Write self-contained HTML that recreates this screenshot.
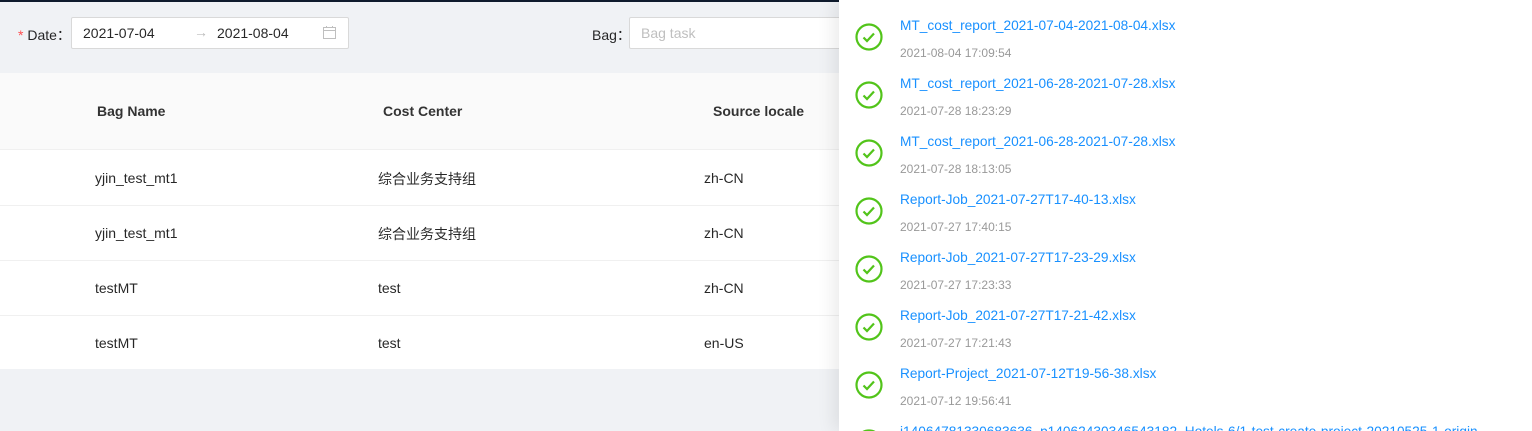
<!DOCTYPE html><html><head><style>
html{overflow:hidden;height:431px}
body{margin:0;width:1532px;height:431px;overflow:hidden;background:#f0f2f5;font-family:"Liberation Sans","Noto Sans CJK SC",sans-serif;font-size:14px;color:rgba(0,0,0,.85);position:relative}
.a{position:absolute;white-space:nowrap}
.topline{position:absolute;left:0;top:0;width:840px;height:2px;background:#0f1b2d}
.inp{position:absolute;background:#fff;border:1px solid #d9d9d9;border-radius:2px;height:30px;box-sizing:border-box}
.table{position:absolute;left:0;top:73px;width:839px;height:296px;background:#fff}
.th{position:absolute;left:0;top:0;width:839px;height:76px;background:#fafafa;border-bottom:1px solid #f0f0f0}
.row{position:absolute;left:0;width:839px;height:55px;border-bottom:1px solid #f0f0f0}
.panel{position:absolute;left:839px;top:0;width:693px;height:431px;overflow:hidden;background:#fff;box-shadow:-6px 0 16px rgba(0,0,0,.08)}
.it{position:absolute;left:0;width:693px}
.it svg{position:absolute;left:16px;top:5px}
.lk{position:absolute;left:61px;top:0;color:#1890ff;font-size:13.7px;white-space:nowrap}
.tm{position:absolute;left:61px;top:28px;color:#999;font-size:12px;white-space:nowrap}
</style></head><body>
<div class="topline"></div>
<div class="a" style="left:18px;top:25px"><span style="color:#ff4d4f">*</span> Date：</div>
<div class="inp" style="left:71px;top:17px;width:278px;height:32px"></div>
<div class="a" style="left:83px;top:25px">2021-07-04</div>
<div class="a" style="left:194px;top:24px;color:#bbb">→</div>
<div class="a" style="left:217px;top:25px">2021-08-04</div>
<svg class="a" style="left:323px;top:26px" width="13" height="13" viewBox="0 0 13 13"><rect x="0.5" y="1.5" width="12" height="11" fill="none" stroke="#bfbfbf"/><line x1="0.5" y1="4.5" x2="12.5" y2="4.5" stroke="#bfbfbf"/><line x1="3.5" y1="0" x2="3.5" y2="2" stroke="#bfbfbf"/><line x1="9.5" y1="0" x2="9.5" y2="2" stroke="#bfbfbf"/></svg>
<div class="a" style="left:592px;top:25px">Bag：</div>
<div class="inp" style="left:629px;top:17px;width:220px;height:32px"></div>
<div class="a" style="left:641px;top:25px;color:#bfbfbf">Bag task</div>
<div class="table">
<div class="th"></div>
<div class="a" style="left:97px;top:30px;font-weight:bold;color:#333">Bag Name</div>
<div class="a" style="left:383px;top:30px;font-weight:bold;color:#333">Cost Center</div>
<div class="a" style="left:713px;top:30px;font-weight:bold;color:#333">Source locale</div>
<div class="row" style="top:77px"><span class="a" style="left:95px;top:20px">yjin_test_mt1</span><span class="a" style="left:378px;top:19px">综合业务支持组</span><span class="a" style="left:704px;top:20px">zh-CN</span></div>
<div class="row" style="top:132px"><span class="a" style="left:95px;top:20px">yjin_test_mt1</span><span class="a" style="left:378px;top:19px">综合业务支持组</span><span class="a" style="left:704px;top:20px">zh-CN</span></div>
<div class="row" style="top:187px"><span class="a" style="left:95px;top:20px">testMT</span><span class="a" style="left:378px;top:20px">test</span><span class="a" style="left:704px;top:20px">zh-CN</span></div>
<div class="row" style="top:242px;border:none"><span class="a" style="left:95px;top:20px">testMT</span><span class="a" style="left:378px;top:20px">test</span><span class="a" style="left:704px;top:20px">en-US</span></div>
</div>
<div class="panel">
<div class="it" style="top:18px"><svg width="28" height="28" viewBox="0 0 28 28"><circle cx="14" cy="14" r="12.5" fill="none" stroke="#52c41a" stroke-width="2.2"/><path d="M8.5 14.5l3.5 3.5 7-7.5" fill="none" stroke="#52c41a" stroke-width="2.2"/></svg><div class="lk">MT_cost_report_2021-07-04-2021-08-04.xlsx</div><div class="tm">2021-08-04 17:09:54</div></div>
<div class="it" style="top:76px"><svg width="28" height="28" viewBox="0 0 28 28"><circle cx="14" cy="14" r="12.5" fill="none" stroke="#52c41a" stroke-width="2.2"/><path d="M8.5 14.5l3.5 3.5 7-7.5" fill="none" stroke="#52c41a" stroke-width="2.2"/></svg><div class="lk">MT_cost_report_2021-06-28-2021-07-28.xlsx</div><div class="tm">2021-07-28 18:23:29</div></div>
<div class="it" style="top:134px"><svg width="28" height="28" viewBox="0 0 28 28"><circle cx="14" cy="14" r="12.5" fill="none" stroke="#52c41a" stroke-width="2.2"/><path d="M8.5 14.5l3.5 3.5 7-7.5" fill="none" stroke="#52c41a" stroke-width="2.2"/></svg><div class="lk">MT_cost_report_2021-06-28-2021-07-28.xlsx</div><div class="tm">2021-07-28 18:13:05</div></div>
<div class="it" style="top:192px"><svg width="28" height="28" viewBox="0 0 28 28"><circle cx="14" cy="14" r="12.5" fill="none" stroke="#52c41a" stroke-width="2.2"/><path d="M8.5 14.5l3.5 3.5 7-7.5" fill="none" stroke="#52c41a" stroke-width="2.2"/></svg><div class="lk">Report-Job_2021-07-27T17-40-13.xlsx</div><div class="tm">2021-07-27 17:40:15</div></div>
<div class="it" style="top:250px"><svg width="28" height="28" viewBox="0 0 28 28"><circle cx="14" cy="14" r="12.5" fill="none" stroke="#52c41a" stroke-width="2.2"/><path d="M8.5 14.5l3.5 3.5 7-7.5" fill="none" stroke="#52c41a" stroke-width="2.2"/></svg><div class="lk">Report-Job_2021-07-27T17-23-29.xlsx</div><div class="tm">2021-07-27 17:23:33</div></div>
<div class="it" style="top:308px"><svg width="28" height="28" viewBox="0 0 28 28"><circle cx="14" cy="14" r="12.5" fill="none" stroke="#52c41a" stroke-width="2.2"/><path d="M8.5 14.5l3.5 3.5 7-7.5" fill="none" stroke="#52c41a" stroke-width="2.2"/></svg><div class="lk">Report-Job_2021-07-27T17-21-42.xlsx</div><div class="tm">2021-07-27 17:21:43</div></div>
<div class="it" style="top:366px"><svg width="28" height="28" viewBox="0 0 28 28"><circle cx="14" cy="14" r="12.5" fill="none" stroke="#52c41a" stroke-width="2.2"/><path d="M8.5 14.5l3.5 3.5 7-7.5" fill="none" stroke="#52c41a" stroke-width="2.2"/></svg><div class="lk">Report-Project_2021-07-12T19-56-38.xlsx</div><div class="tm">2021-07-12 19:56:41</div></div>
<div class="it" style="top:424px"><svg width="28" height="28" viewBox="0 0 28 28"><circle cx="14" cy="14" r="12.5" fill="none" stroke="#52c41a" stroke-width="2.2"/></svg><div class="lk">i14064781330683636_p14062430346543182_Hotels-6/1-test-create-project-20210525-1-origin</div></div>
</div>
</body></html>
